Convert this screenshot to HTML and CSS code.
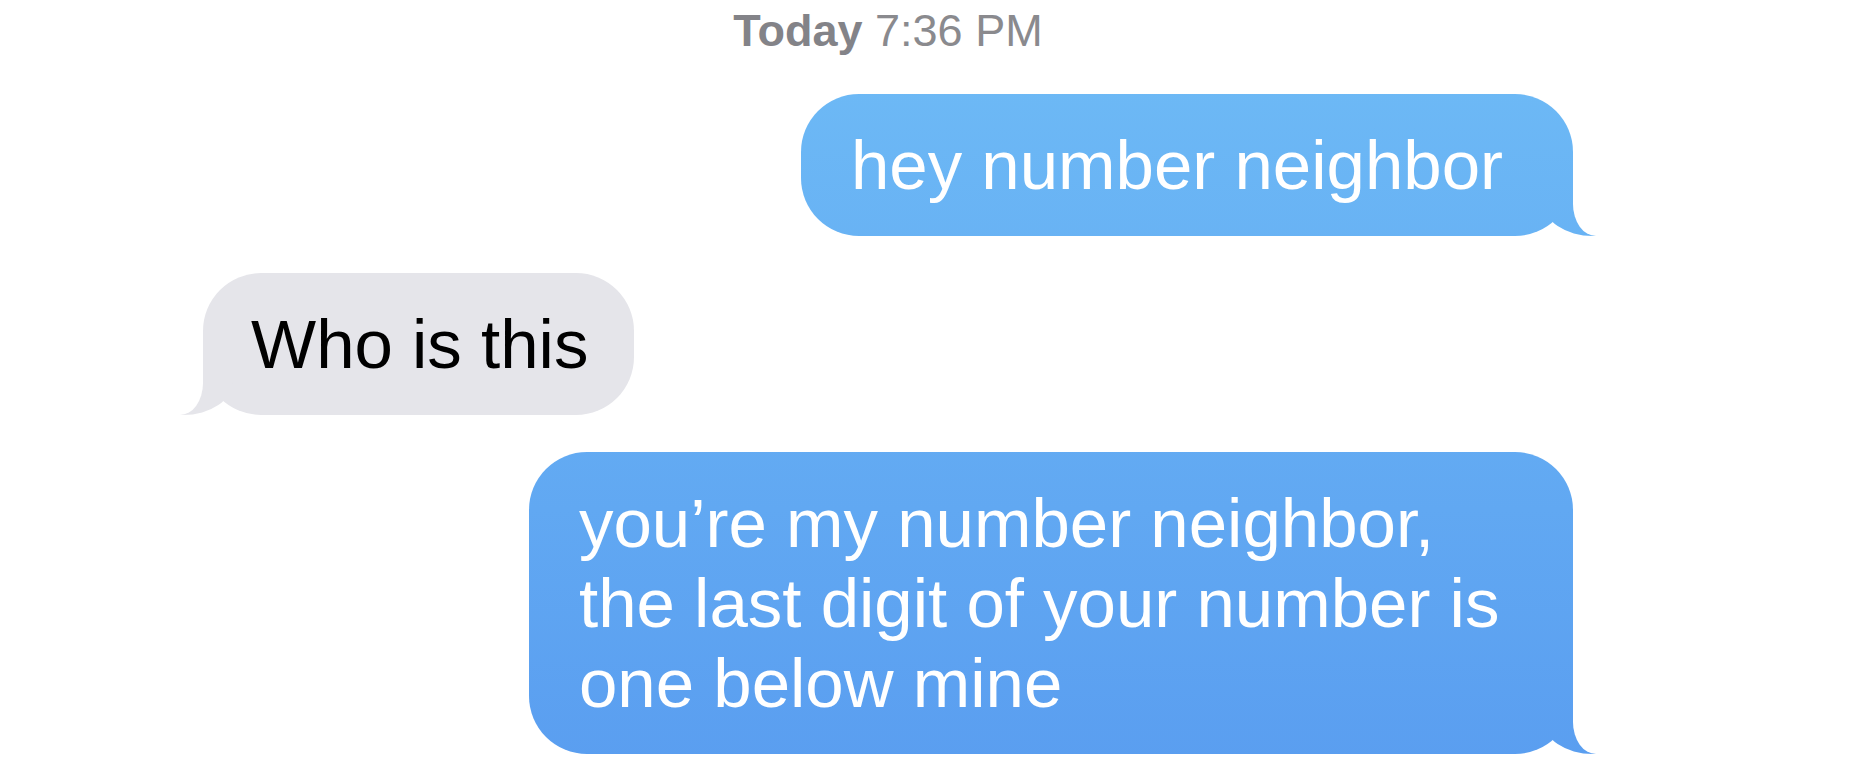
FILE: index.html
```html
<!DOCTYPE html>
<html lang="en">
  <head>
    <meta charset="UTF-8" />
    <meta name="viewport" content="width=device-width, initial-scale=1.0" />
    <title>Messages</title>
    <link rel="stylesheet" href="styles.css">
  </head>
  <body>
    <main class="thread">
      <p class="stamp"><b>Today</b> 7:36 PM</p>

      <div class="bubble sent">hey number neighbor</div>

      <div class="bubble received">Who is this</div>

      <div class="bubble sent">you’re my number neighbor, the last digit of your number is one below mine</div>
    </main>
  </body>
</html>
```

FILE: styles.css
```css
/* page */
body {
  margin: 0;
  background: #fff;
  font-family: "Liberation Sans", Arial, sans-serif;
}

/* conversation column */
.thread {
  display: flex;
  flex-direction: column;
  gap: 37px;
  padding: 5px 280px 0 203px;
}

.stamp {
  margin: 0;
  text-align: center;
  font-size: 45px;
  line-height: 52px;
  color: #8a8a8e;
}

.stamp b {
  font-weight: 700;
  color: #838388;
}

/* message bubbles */
.bubble {
  position: relative;
  max-width: 924px;
  font-size: 69px;
  line-height: 80px;
  border-radius: 58px;
}

.sent {
  align-self: flex-end;
  padding: 32px 70px 30px 50px;
  color: #fff;
  background: linear-gradient(to bottom, #6fbcf6 0, #5a9ef0 764px) fixed;
}

.received {
  align-self: flex-start;
  padding: 32px 46px 30px 48px;
  color: #000;
  background: #e5e5ea;
}

/* tail: coloured block, then a white block with a rounded corner cuts the curve */
.bubble::before,
.bubble::after {
  content: "";
  position: absolute;
  bottom: 0;
  height: 64px;
}

.sent::before {
  right: -26px;
  width: 56px;
  background: linear-gradient(to bottom, #6fbcf6 0, #5a9ef0 764px) fixed;
  border-bottom-left-radius: 50px 34px;
}

.sent::after {
  right: -44px;
  width: 44px;
  background: #fff;
  border-bottom-left-radius: 23px 32px;
}

.received::before {
  left: -26px;
  width: 56px;
  background: #e5e5ea;
  border-bottom-right-radius: 50px 34px;
}

.received::after {
  left: -44px;
  width: 44px;
  background: #fff;
  border-bottom-right-radius: 23px 32px;
}
```
